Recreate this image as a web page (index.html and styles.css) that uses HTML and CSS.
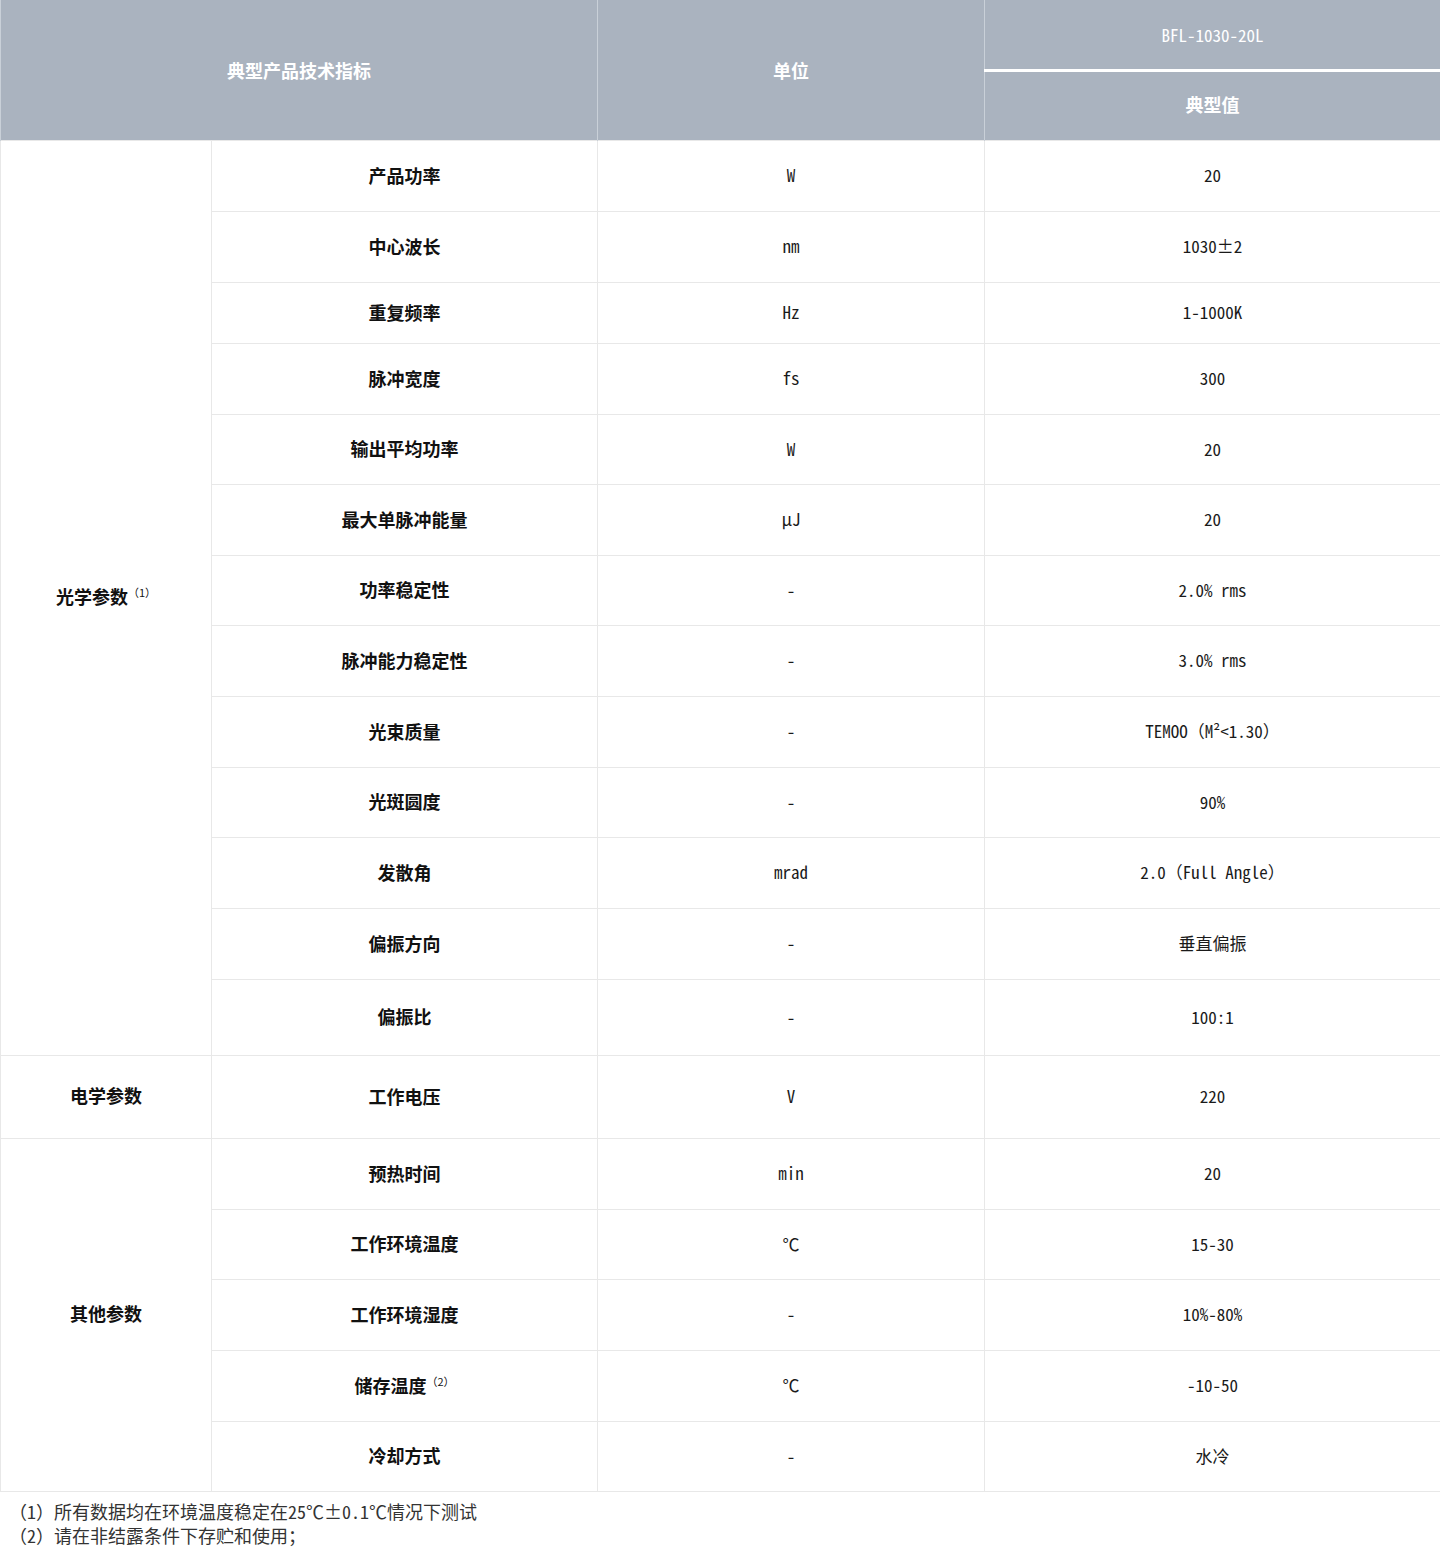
FILE: index.html
```html
<!DOCTYPE html>
<html lang="zh-CN">
<head>
<meta charset="utf-8">
<title>BFL-1030-20L</title>
<link rel="stylesheet" href="styles.css">
</head>
<body>
<div class="page">
<table class="spec">
  <colgroup>
    <col class="c-group"><col class="c-param"><col class="c-unit"><col class="c-val">
  </colgroup>
  <thead>
    <tr class="hr1">
      <th colspan="2" rowspan="2">典型产品技术指标</th>
      <th rowspan="2">单位</th>
      <th class="model">BFL-1030-20L</th>
    </tr>
    <tr class="hr2">
      <th class="typ">典型值</th>
    </tr>
  </thead>
  <tbody>
    <tr><td rowspan="13" class="group">光学参数<sup>（1）</sup></td><td class="lbl">产品功率</td><td class="v">W</td><td class="v">20</td></tr>
    <tr><td class="lbl">中心波长</td><td class="v">nm</td><td class="v">1030±2</td></tr>
    <tr class="h61"><td class="lbl">重复频率</td><td class="v">Hz</td><td class="v">1-1000K</td></tr>
    <tr><td class="lbl">脉冲宽度</td><td class="v">fs</td><td class="v">300</td></tr>
    <tr class="h70"><td class="lbl">输出平均功率</td><td class="v">W</td><td class="v">20</td></tr>
    <tr><td class="lbl">最大单脉冲能量</td><td class="v">μJ</td><td class="v">20</td></tr>
    <tr class="h70"><td class="lbl">功率稳定性</td><td class="v">-</td><td class="v">2.0% rms</td></tr>
    <tr><td class="lbl">脉冲能力稳定性</td><td class="v">-</td><td class="v">3.0% rms</td></tr>
    <tr><td class="lbl">光束质量</td><td class="v">-</td><td class="v">TEMOO（M²&lt;1.30）</td></tr>
    <tr class="h70"><td class="lbl">光斑圆度</td><td class="v">-</td><td class="v">90%</td></tr>
    <tr><td class="lbl">发散角</td><td class="v">mrad</td><td class="v">2.0（Full Angle）</td></tr>
    <tr><td class="lbl">偏振方向</td><td class="v">-</td><td class="v">垂直偏振</td></tr>
    <tr class="h76"><td class="lbl">偏振比</td><td class="v">-</td><td class="v">100:1</td></tr>
    <tr class="h83"><td class="group">电学参数</td><td class="lbl">工作电压</td><td class="v">V</td><td class="v">220</td></tr>
    <tr><td rowspan="5" class="group">其他参数</td><td class="lbl">预热时间</td><td class="v">min</td><td class="v">20</td></tr>
    <tr class="h70"><td class="lbl">工作环境温度</td><td class="v">℃</td><td class="v">15-30</td></tr>
    <tr><td class="lbl">工作环境湿度</td><td class="v">-</td><td class="v">10%-80%</td></tr>
    <tr><td class="lbl">储存温度<sup>（2）</sup></td><td class="v">℃</td><td class="v">-10-50</td></tr>
    <tr class="h70"><td class="lbl">冷却方式</td><td class="v">-</td><td class="v">水冷</td></tr>
  </tbody>
</table>
<div class="notes">
  <p>（1）所有数据均在环境温度稳定在25℃±0.1℃情况下测试</p>
  <p>（2）请在非结露条件下存贮和使用；</p>
</div>
</div>
</body>
</html>
```

FILE: styles.css
```css
html, body {
  margin: 0;
  padding: 0;
  background: #ffffff;
}

body {
  font-family: "Noto Sans CJK SC", "Noto Sans", sans-serif;
  color: #111111;
}

.page {
  width: 1440px;
}

.spec {
  width: 1440px;
  table-layout: fixed;
  border-collapse: collapse;
  border-spacing: 0;
}

.c-group { width: 211px; }
.c-param { width: 386px; }
.c-unit  { width: 387px; }
.c-val   { width: 456px; }

.spec th {
  background: #aab3bf;
  color: #ffffff;
  font-size: 18px;
  font-weight: 700;
  text-align: center;
  vertical-align: middle;
  padding: 0;
  border-left: 1px solid #c9d0d8;
  border-right: 1px solid #c9d0d8;
}

.spec thead tr.hr1 { height: 70px; }
.spec thead tr.hr2 { height: 70px; }

.spec th.model {
  font-family: "Noto Sans Mono CJK SC", "DejaVu Sans Mono", monospace;
  font-weight: 400;
  font-size: 17px;
  border-bottom: 3px solid #ffffff;
  line-height: 1;
}

.spec th.typ { padding-bottom: 3px; }

.spec tbody tr { height: 71px; }
.spec tbody tr.h70 { height: 70px; }
.spec tbody tr.h61 { height: 61px; }
.spec tbody tr.h76 { height: 76px; }
.spec tbody tr.h83 { height: 83px; }

.spec td {
  border: 1px solid #e8e8e8;
  text-align: center;
  vertical-align: middle;
  padding: 0;
  font-size: 18px;
  line-height: 1.2;
}

.spec td.group,
.spec td.lbl {
  font-weight: 700;
  color: #111111;
}

.spec td.group { padding-bottom: 2px; }

.spec td.v {
  font-family: "Noto Sans Mono CJK SC", "Noto Sans CJK SC", "DejaVu Sans Mono", monospace;
  font-weight: 400;
  font-size: 17px;
  color: #1a1a1a;
}

.spec sup {
  font-size: 11px;
  font-weight: 400;
  vertical-align: 7px;
  line-height: 0;
  margin-left: 0;
}

.notes {
  padding: 7px 0 0 9px;
  font-family: "Noto Sans Mono CJK SC", "Noto Sans CJK SC", sans-serif;
  font-size: 18px;
  color: #333333;
}

.notes p {
  margin: 0;
  line-height: 24px;
}
```
